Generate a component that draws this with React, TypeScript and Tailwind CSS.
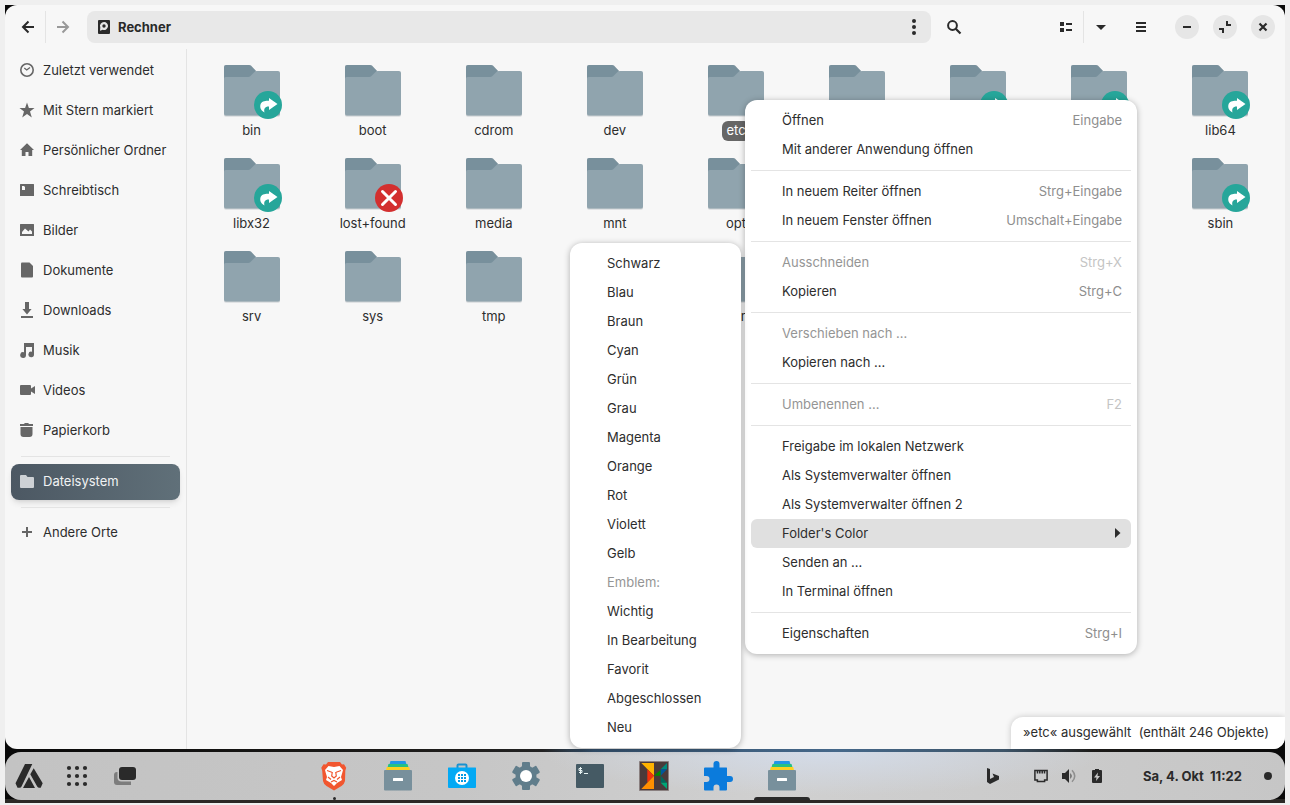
import React from "react";

type Emblem = "link" | "denied";
type Folder = { name?: string; emblem?: Emblem; selected?: boolean };

const folders: Folder[] = [
  { name: "bin", emblem: "link" },
  { name: "boot" },
  { name: "cdrom" },
  { name: "dev" },
  { name: "etc", selected: true },
  {},
  { emblem: "link" },
  { emblem: "link" },
  { name: "lib64", emblem: "link" },
  { name: "libx32", emblem: "link" },
  { name: "lost+found", emblem: "denied" },
  { name: "media" },
  { name: "mnt" },
  { name: "opt" },
  {},
  {},
  {},
  { name: "sbin", emblem: "link" },
  { name: "srv" },
  { name: "sys" },
  { name: "tmp" },
  {},
  { name: "var" },
];

type MenuEntry = { label: string; keys?: string; disabled?: boolean; active?: boolean };

const menuGroups: MenuEntry[][] = [
  [{ label: "Öffnen", keys: "Eingabe" }, { label: "Mit anderer Anwendung öffnen" }],
  [
    { label: "In neuem Reiter öffnen", keys: "Strg+Eingabe" },
    { label: "In neuem Fenster öffnen", keys: "Umschalt+Eingabe" },
  ],
  [
    { label: "Ausschneiden", keys: "Strg+X", disabled: true },
    { label: "Kopieren", keys: "Strg+C" },
  ],
  [{ label: "Verschieben nach …", disabled: true }, { label: "Kopieren nach …" }],
  [{ label: "Umbenennen …", keys: "F2", disabled: true }],
  [
    { label: "Freigabe im lokalen Netzwerk" },
    { label: "Als Systemverwalter öffnen" },
    { label: "Als Systemverwalter öffnen 2" },
    { label: "Folder's Color", active: true },
    { label: "Senden an …" },
    { label: "In Terminal öffnen" },
  ],
  [{ label: "Eigenschaften", keys: "Strg+I" }],
];

const colorEntries: MenuEntry[] = [
  { label: "Schwarz" },
  { label: "Blau" },
  { label: "Braun" },
  { label: "Cyan" },
  { label: "Grün" },
  { label: "Grau" },
  { label: "Magenta" },
  { label: "Orange" },
  { label: "Rot" },
  { label: "Violett" },
  { label: "Gelb" },
  { label: "Emblem:", disabled: true },
  { label: "Wichtig" },
  { label: "In Bearbeitung" },
  { label: "Favorit" },
  { label: "Abgeschlossen" },
  { label: "Neu" },
];

function Icon({ children, className = "" }: { children: React.ReactNode; className?: string }) {
  return (
    <svg viewBox="0 0 16 16" aria-hidden="true" className={`size-4 shrink-0 fill-current ${className}`}>
      {children}
    </svg>
  );
}

const places = [
  {
    label: "Zuletzt verwendet",
    icon: (
      <>
        <circle cx="8" cy="8" r="6.200" fill="none" stroke="currentColor" strokeWidth="1.600" />
        <path d="M5.300 6 7.700 8 11 5.500" fill="none" stroke="currentColor" strokeWidth="1.300" />
      </>
    ),
  },
  {
    label: "Mit Stern markiert",
    icon: <path d="M8 .5 9.900 6h5.600L11 9.400l1.800 6L8 11.900 3.200 15.400 5 9.400.5 6h5.600z" />,
  },
  { label: "Persönlicher Ordner", icon: <path d="M8 1.300 1 8h1.800v6H6.500V10h3v4h3.700V8H15z" /> },
  {
    label: "Schreibtisch",
    icon: <path fillRule="evenodd" d="M1.500 2h13q.5 0 .5.500v11q0 .5-.5.500h-13q-.5 0-.5-.5v-11q0-.5.5-.5zM3 4v4h3V5L5 4z" />,
  },
  {
    label: "Bilder",
    icon: <path fillRule="evenodd" d="M1.500 2h13q.5 0 .5.500v11q0 .5-.5.500h-13q-.5 0-.5-.5v-11q0-.5.5-.5zM3 12h10V9.500L11 7.500 9.500 9.500 6 6.500 3 10z" />,
  },
  { label: "Dokumente", icon: <path d="M3 .5h7.500L14 4v10.500q0 1-1 1H3q-1 0-1-1v-13q0-1 1-1z" /> },
  { label: "Downloads", icon: <path d="M6 0h4v7h2.600L8 12.500 3.400 7H6zM2 14h12v2H2z" /> },
  {
    label: "Musik",
    icon: <path d="M5 1h10v11.500a2.800 2.800 0 1 1-2-2.700V5H7v8a2.900 2.900 0 1 1-2-2.700z" />,
  },
  { label: "Videos", icon: <path d="M2 3h9q1 0 1 1v2.500L16 4v8l-4-2.500V12q0 1-1 1H2q-1 0-1-1V4q0-1 1-1z" /> },
  { label: "Papierkorb", icon: <path d="M1 2h3.800L6 1h3l1.200 1H14v2H1zM1.500 5h12v7q0 3-3 3h-6q-3 0-3-3z" /> },
];

function Place({ label, icon }: { label: string; icon: React.ReactNode }) {
  return (
    <a href="#" className="flex h-10 items-center gap-2 px-[13px] pb-0.5 text-[#2d2d2d]">
      <Icon className="text-[#666]">{icon}</Icon>
      {label}
    </a>
  );
}

function FolderIcon({ emblem }: { emblem?: Emblem }) {
  return (
    <svg viewBox="0 0 64 60" aria-hidden="true" className="h-[60px] w-16">
      <path d="M4 53V6q0-2 2-2h23q1.500 0 2.500 1l5.500 6h21q2 0 2 2v41q0 1.500-2 1.500H6q-2 0-2-1.500z" fill="#c9ced1" />
      <path d="M4 24V6q0-2 2-2h23q1.200 0 2 .8l5 5.200-5 8z" fill="#78909c" />
      <path d="M4 17.500q0-1.500 1.500-1.500H28q1.500 0 2.500-1l4-4q1-1 2.500-1h21q2 0 2 2v40.500q0 2-2 2H6q-2 0-2-2z" fill="#90a4ae" />
      {emblem && <circle cx="48" cy="44" r="14" fill={emblem === "link" ? "#26a69a" : "#d32f2f"} />}
      {emblem === "link" && (
        <path d="M49 37l8.500 6L49 49v-3.500c-4-.2-5.500 2.500-4.500 6-3-1.500-5-4.500-4-8 .9-3.200 4.500-4 8.500-3.800z" fill="#fff" />
      )}
      {emblem === "denied" && (
        <path d="M41.500 37.500l13 13m0-13l-13 13" stroke="#fff" strokeWidth="3" strokeLinecap="round" />
      )}
    </svg>
  );
}

function MenuRow({ entry }: { entry: MenuEntry }) {
  return (
    <button
      type="button"
      role="menuitem"
      disabled={entry.disabled}
      className={`flex h-[29px] w-full items-center justify-between rounded-md pr-[9px] pb-0.5 pl-[31px] whitespace-nowrap ${
        entry.disabled ? "text-[#959595]" : "text-[#2d2d2d]"
      } ${entry.active ? "bg-[#e0e0e0]" : ""}`}
    >
      {entry.label}
      {entry.keys && <span className={entry.disabled ? "text-[#c4c4c4]" : "text-[#8e8e8e]"}>{entry.keys}</span>}
      {entry.active && (
        <svg viewBox="0 0 8 10" aria-hidden="true" className="h-2.5 w-2 fill-[#2d2d2d]">
          <path d="M1 0 6.500 5l-5.500 5z" />
        </svg>
      )}
    </button>
  );
}

function RoundButton({ label, children }: { label: string; children: React.ReactNode }) {
  return (
    <button type="button" aria-label={label} className="flex size-6 items-center justify-center rounded-full bg-[#e6e6e6]">
      <Icon>{children}</Icon>
    </button>
  );
}

function ToolButton({ label, children, muted }: { label: string; children: React.ReactNode; muted?: boolean }) {
  return (
    <button
      type="button"
      aria-label={label}
      className={`flex h-8 w-[34px] items-center justify-center ${muted ? "text-[#999]" : ""}`}
    >
      <Icon>{children}</Icon>
    </button>
  );
}

function Header() {
  return (
    <header className="flex h-11 shrink-0 items-center pr-2.5 pl-1.5 text-[#2a2a2a]">
      <ToolButton label="Zurück">
        <path d="M14 8H3m5.500-5.500L3 8l5.500 5.500" fill="none" stroke="currentColor" strokeWidth="2" />
      </ToolButton>
      <span className="h-8 w-px bg-[#e4e4e4]" />
      <ToolButton label="Vor" muted>
        <path d="M2 8h11M7.500 2.500 13 8l-5.500 5.500" fill="none" stroke="currentColor" strokeWidth="2" />
      </ToolButton>
      <div className="ml-[7px] flex h-8 flex-1 items-center rounded-lg bg-[#e8e8e8] pl-2">
        <button type="button" className="flex items-center gap-[7px] pb-px font-bold">
          <Icon>
            <path
              fillRule="evenodd"
              d="M4 1h10q1 0 1 1v12q0 1-1 1H4q-1 0-1-1V2q0-1 1-1zM9 3a4 4 0 0 0-3.700 5.500L5 11.700l2.800-.9A4 4 0 1 0 9 3zm0 2.300a1.700 1.700 0 1 1 0 3.400 1.700 1.700 0 0 1 0-3.400z"
            />
          </Icon>
          Rechner
        </button>
        <span className="flex-1" />
        <ToolButton label="Ortsmenü">
          <circle cx="8" cy="2" r="2" />
          <circle cx="8" cy="8" r="2" />
          <circle cx="8" cy="14" r="2" />
        </ToolButton>
      </div>
      <div className="mr-[78px] ml-1.5">
        <ToolButton label="Suchen">
          <circle cx="6.500" cy="6.500" r="4.400" fill="none" stroke="currentColor" strokeWidth="2" />
          <path d="M9.500 9.500l5 5" stroke="currentColor" strokeWidth="2.200" />
        </ToolButton>
      </div>
      <ToolButton label="Ansicht">
        <path d="M2 3h4v4H2zM2 9h4v4H2zM8 4h6v2H8zM8 10h6v2H8z" />
      </ToolButton>
      <span className="h-8 w-px bg-[#e4e4e4]" />
      <ToolButton label="Ansichtsoptionen">
        <path d="M3 6h10l-5 5z" />
      </ToolButton>
      <div className="mr-[17px] ml-1.5">
        <ToolButton label="Menü">
          <path d="M3 3h10v2H3zM3 7h10v2H3zM3 11h10v2H3z" />
        </ToolButton>
      </div>
      <div className="flex gap-3.5">
        <RoundButton label="Minimieren">
          <path d="M4 7h8v2H4z" />
        </RoundButton>
        <RoundButton label="Wiederherstellen">
          <path d="M9 2h2v3h3v2H9zM2 9h5v5H5v-3H2z" />
        </RoundButton>
        <RoundButton label="Schließen">
          <path d="M4.500 4.500l7 7m0-7l-7 7" stroke="currentColor" strokeWidth="2.200" />
        </RoundButton>
      </div>
    </header>
  );
}

function Sidebar() {
  return (
    <nav className="w-[182px] shrink-0 border-r border-[#e4e4e4] px-px pt-0.5">
      {places.map((p) => (
        <Place key={p.label} {...p} />
      ))}
      <div className="mx-[15px] mt-[5px] mb-[7px] h-px bg-[#e4e4e4]" />
      <a
        href="#"
        aria-current="page"
        className="mx-[5px] flex h-9 items-center gap-2 rounded-lg bg-linear-to-r from-[#4c5863] to-[#607079] px-2 pb-0.5 text-[#f0f2f3] shadow-md"
      >
        <Icon className="text-[#cdd1d5]">
          <path d="M2 2h5l1.500 2H14q1 0 1 1v9q0 1-1 1H2q-1 0-1-1V3q0-1 1-1z" />
        </Icon>
        Dateisystem
      </a>
      <div className="mx-[15px] mt-[7px] mb-[5px] h-px bg-[#e4e4e4]" />
      <Place label="Andere Orte" icon={<path d="M7 3h2v4h4v2H9v4H7V9H3V7h4z" />} />
    </nav>
  );
}

function FilesGlyph() {
  return (
    <>
      <path d="M8.500 2h15l1 3.500h-17z" fill="#2196e8" />
      <path d="M6.500 5h19l1 3.500h-21z" fill="#26c183" />
      <path d="M4.800 8h22.400l1 4H3.800z" fill="#fdd022" />
      <path d="M2 12q0-1 1-1h26q1 0 1 1v18.500q0 1-1 1H3q-1 0-1-1z" fill="#78909c" />
      <rect x="11" y="19" width="10" height="3" rx=".5" fill="#fff" />
    </>
  );
}

const dockApps: { name: string; mark?: "running" | "active"; glyph: React.ReactNode }[] = [
  {
    name: "Brave",
    mark: "running",
    glyph: (
      <>
        <path d="M10 3h12l2 2.500 2-.3 2.200 3.500-.9 3L27 22q-.6 3-3.500 5L16 31.500 8.500 27Q5.600 25 5 22L4.200 11.700l-.9-3L5.500 5.200l2.500.3z" fill="#f1562f" />
        <path d="M10.500 7l5.500 1 5.500-1 3.500 4-.8 3-1.200 4 1 3-5 3-3 3-3-3-5-3 1-3-1.200-4L7 11z" fill="#fff" />
        <path d="M9 11.500l4.800 1.800M23 11.500l-4.800 1.800M14.300 13l-.6 4 2.300 2 2.300-2-.6-4M10 18l3 2.500M22 18l-3 2.500M13 23l3-1.500 3 1.500" fill="none" stroke="#f1562f" strokeWidth="1.200" />
      </>
    ),
  },
  { name: "Dateien", glyph: <FilesGlyph /> },
  {
    name: "Software",
    glyph: (
      <>
        <path d="M11.500 10V6.500q0-1 1-1h7q1 0 1 1V10" fill="none" stroke="#1a92cf" strokeWidth="2" />
        <path d="M2 9q0-.5.5-.5h27q.5 0 .5.500v19q0 1-1 1H3q-1 0-1-1z" fill="#03a9f4" />
        <circle cx="16" cy="19" r="7" fill="#fff" />
        <path d="M12 15h2v2h-2zM15 15h2v2h-2zM18 15h2v2h-2zM12 18h2v2h-2zM15 18h2v2h-2zM18 18h2v2h-2zM12 21h2v2h-2zM15 21h2v2h-2zM18 21h2v2h-2z" fill="#039be5" />
      </>
    ),
  },
  {
    name: "Einstellungen",
    glyph: (
      <g fill="#607d8b">
        <circle cx="16" cy="17" r="10.500" />
        <rect x="12" y="3" width="8" height="28" rx="1" />
        <rect x="12" y="3" width="8" height="28" rx="1" transform="rotate(60 16 17)" />
        <rect x="12" y="3" width="8" height="28" rx="1" transform="rotate(120 16 17)" />
        <circle cx="16" cy="17" r="6" fill="#fff" />
      </g>
    ),
  },
  {
    name: "Terminal",
    glyph: (
      <>
        <rect x="2" y="5" width="28" height="24" rx="1" fill="#455a64" />
        <path d="M8 9.500H5v2h3v2H5M6.500 8v7M10 14.500h4" fill="none" stroke="#e8f3f3" strokeWidth="1" />
      </>
    ),
  },
  {
    name: "Kreativ",
    glyph: (
      <>
        <path d="M1.500 2.500h29v29h-29z" fill="#4a3a3a" stroke="#8a8080" />
        <path d="M3.300 4H16v12.700z" fill="#ffb300" />
        <path d="M9.300 10.300L16 16.700l-6.700 7z" fill="#f4310b" />
        <path d="M3.300 30H16V16.700z" fill="#ff8f00" />
        <path d="M16 16.700l6.700-6v6z" fill="#008a00" />
        <path d="M29 4v6.300h-6.300z" fill="#00897b" />
        <path d="M22.700 10.300H29l-6.300 6.400z" fill="#01579b" />
        <path d="M22.700 16.700l6.300 7h-6.300z" fill="#00695c" />
        <path d="M22.700 23.700H29V30z" fill="#00a676" />
      </>
    ),
  },
  {
    name: "Erweiterungen",
    glyph: (
      <path
        d="M3 8.500h8.500V5a3 3 0 0 1 6 0v3.500h7q.5 0 .5.500v8h3a3 3 0 0 1 0 6h-3v7.500q0 1-1 1h-6.500v-3a3 3 0 0 0-6 0v3H3q-1 0-1-1V23h2.500a3 3 0 0 0 0-6H2V9.500q0-1 1-1z"
        fill="#0b7bdc"
      />
    ),
  },
  { name: "Dateien (geöffnet)", mark: "active", glyph: <FilesGlyph /> },
];

const trayIcons = [
  {
    name: "Netzwerk",
    icon: (
      <path
        d="M1.900 2.400h12.200v9.700h-2.500v1.500H4.400v-1.500H1.900zM4.500 3v2.500M6.800 3v2.500M9.200 3v2.500M11.500 3v2.500"
        fill="none"
        stroke="currentColor"
        strokeWidth="1.500"
      />
    ),
  },
  {
    name: "Lautstärke",
    icon: (
      <>
        <path d="M1 5h3l4-4v14l-4-4H1zM9.500 5q2 3 0 6z" />
        <path d="M11 2.200q5.500 5.800 0 11.600" fill="none" stroke="#8f8f8f" strokeWidth="1.500" />
      </>
    ),
  },
  {
    name: "Akku",
    icon: <path fillRule="evenodd" d="M6 1h4v1h2q1 0 1 1v11q0 1-1 1H4q-1 0-1-1V3q0-1 1-1h2zM9 4.500 5 9.500h2.500L7 13l4-5H8.500z" />,
  },
];

function Panel() {
  return (
    <footer className="mb-[3px] flex h-12 shrink-0 items-center justify-between rounded-2xl bg-[radial-gradient(ellipse_22%_90%_at_64%_0%,#d3dbe8,transparent),linear-gradient(90deg,#c3c3c3,#c6c6c6_35%,#d0d0d0_60%,#c6c6c6)] px-2 text-[#2a2a2a]">
      <div className="flex items-center gap-4">
        <button type="button" aria-label="Startmenü" className="size-8">
          <svg viewBox="0 0 32 32" aria-hidden="true" className="size-8 fill-[#2a2a2a]">
            <path d="M12 4h7.300L8.500 26.500q-.5 1.300-2 1.300H4.500l-2-4.500zM20.700 8.300l9 15-2 4.500h-1.500q-1.200 0-2-1.300l-6.900-12.200zM16 17L22 28H10z" />
          </svg>
        </button>
        <button type="button" aria-label="Anwendungen" className="size-8">
          <svg viewBox="0 0 32 32" aria-hidden="true" className="size-8 fill-[#2a2a2a]">
            {[8, 16, 24].map((y) => [8, 16, 24].map((x) => <circle key={`${x}-${y}`} cx={x} cy={y} r="2.100" />))}
          </svg>
        </button>
        <button type="button" aria-label="Arbeitsflächen" className="size-8">
          <svg viewBox="0 0 32 32" aria-hidden="true" className="size-8">
            <path d="M5 15q0-3 3-3h14v13H8q-3 0-3-3z" fill="#7d7d7d" />
            <rect x="8.500" y="5.500" width="20" height="16" rx="4" fill="#c6c6c6" />
            <rect x="10" y="7" width="17" height="13" rx="3" fill="#2a2a2a" />
          </svg>
        </button>
      </div>
      <div className="flex self-stretch">
        {dockApps.map((app) => (
          <button key={app.name} type="button" aria-label={app.name} className="flex w-16 flex-col items-center justify-between pt-[7px]">
            <svg viewBox="0 0 32 34" aria-hidden="true" className="h-[34px] w-8">
              {app.glyph}
            </svg>
            {app.mark && (
              <span className={app.mark === "active" ? "h-[3px] w-14 rounded-t-sm bg-[#2a2a2a]" : "size-[3px] rounded-full bg-[#2a2a2a]"} />
            )}
          </button>
        ))}
      </div>
      <div className="flex w-[302px] items-center">
        <button type="button" aria-label="Bing" className="mr-4 flex h-8 w-9 items-center justify-center">
          <Icon>
            <path d="M2 0l3 1v10l4-2-1.500-3.500L14 8v3.500L5 16l-3-2z" />
          </Icon>
        </button>
        {trayIcons.map((t) => (
          <button key={t.name} type="button" aria-label={t.name} className="flex h-8 w-7 items-center justify-center">
            <Icon>{t.icon}</Icon>
          </button>
        ))}
        <time className="ml-8 pb-px font-bold whitespace-nowrap">Sa, 4. Okt&nbsp; 11:22</time>
        <span className="mr-[5px] ml-auto size-2 rounded-full bg-[#2a2a2a]" />
      </div>
    </footer>
  );
}

export default function App() {
  return (
    <div className="flex min-h-screen flex-col bg-[#efefef] p-[5px] pb-[2px] font-['Inter','Noto_Sans',sans-serif] text-[13px] leading-5">
      <div className="relative flex flex-1 flex-col gap-[3px] bg-[linear-gradient(180deg,transparent_calc(100%-4px),#2b2926_calc(100%-4px)),linear-gradient(90deg,#080808,#1c1b19_30%,#222_42%,#34506c_46%,#45688a_65%,#3d5468_78%,#1c1b19_85%,#0a0a0a)]">
        <main className="relative flex flex-1 flex-col overflow-hidden rounded-xl bg-[#f7f7f7]">
          <Header />
          <div className="flex flex-1">
            <Sidebar />
            <ul className="grid flex-1 grid-cols-9 content-start gap-y-[13px] px-1 pt-3">
              {folders.map((f, i) => (
                <li key={i} className="flex flex-col items-center text-[#2d2d2d]">
                  <FolderIcon emblem={f.emblem} />
                  <span className={`h-5 px-1 leading-[18px] ${f.selected ? "rounded-md bg-[#666] text-white" : ""}`}>
                    {f.name}
                  </span>
                </li>
              ))}
            </ul>
          </div>
          <p className="absolute right-0 bottom-0 min-w-[274px] rounded-tl-xl bg-white px-3 pt-[5px] pb-[7px] text-[#2d2d2d] shadow-[0_0_6px_rgba(0,0,0,0.2)]">
            »etc« ausgewählt&nbsp; (enthält 246 Objekte)
          </p>
        </main>
        <Panel />
        <div
          role="menu"
          className="absolute top-[95px] left-[740px] w-[392px] rounded-xl bg-white p-1.5 shadow-[0_1px_6px_rgba(0,0,0,0.3)]"
        >
          {menuGroups.map((group, i) => (
            <div key={i} className={i > 0 ? "mt-1.5 border-t border-[#e4e4e4] pt-1.5" : ""}>
              {group.map((e) => (
                <MenuRow key={e.label} entry={e} />
              ))}
            </div>
          ))}
        </div>
        <div
          role="menu"
          className="absolute top-[238px] left-[565px] w-[171px] rounded-xl bg-white p-1.5 shadow-[0_1px_6px_rgba(0,0,0,0.3)]"
        >
          {colorEntries.map((e) => (
            <MenuRow key={e.label} entry={e} />
          ))}
        </div>
      </div>
    </div>
  );
}
